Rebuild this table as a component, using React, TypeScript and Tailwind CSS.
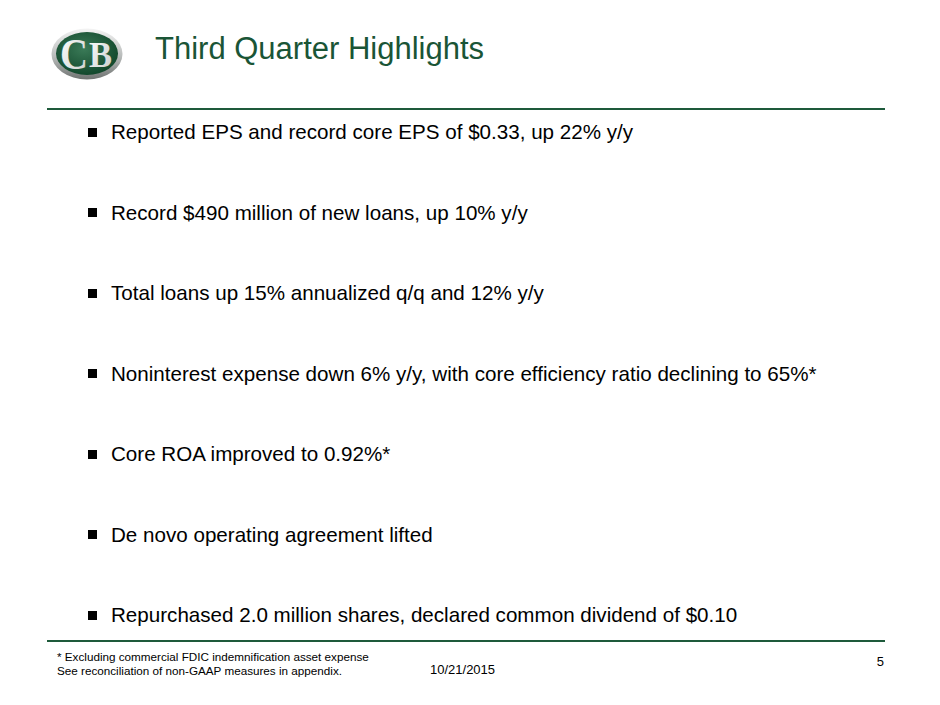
const bullets = [
  "Reported EPS and record core EPS of $0.33, up 22% y/y",
  "Record $490 million of new loans, up 10% y/y",
  "Total loans up 15% annualized q/q and 12% y/y",
  "Noninterest expense down 6% y/y, with core efficiency ratio declining to 65%*",
  "Core ROA improved to 0.92%*",
  "De novo operating agreement lifted",
  "Repurchased 2.0 million shares, declared common dividend of $0.10",
];

function Logo() {
  return (
    <svg width="72" height="52" viewBox="0 0 72 52">
      <defs>
        <linearGradient id="ring" x1="0" y1="0" x2="0" y2="1">
          <stop offset="0" stopColor="#f4f4f4" />
          <stop offset="0.55" stopColor="#b8bbba" />
          <stop offset="1" stopColor="#6f7371" />
        </linearGradient>
        <radialGradient id="face" cx="0.45" cy="0.4" r="0.65">
          <stop offset="0" stopColor="#3a7a57" />
          <stop offset="1" stopColor="#0f4429" />
        </radialGradient>
        <linearGradient id="letter" x1="0" y1="0" x2="1" y2="1">
          <stop offset="0" stopColor="#ffffff" />
          <stop offset="1" stopColor="#c9ccca" />
        </linearGradient>
      </defs>
      <ellipse cx="36" cy="26" rx="35.5" ry="25.5" fill="url(#ring)" />
      <ellipse cx="36" cy="25.5" rx="31" ry="21.5" fill="url(#face)" />
      <text
        x="9"
        y="41"
        fill="url(#letter)"
        fontFamily="'Liberation Serif', serif"
        fontWeight="bold"
        fontSize="44"
        textLength="28"
        lengthAdjust="spacingAndGlyphs"
      >
        C
      </text>
      <text
        x="38"
        y="39"
        fill="url(#letter)"
        fontFamily="'Liberation Serif', serif"
        fontWeight="bold"
        fontSize="36"
        textLength="23"
        lengthAdjust="spacingAndGlyphs"
      >
        B
      </text>
    </svg>
  );
}

export default function App() {
  return (
    <div className="w-[940px] h-[705px] bg-white overflow-hidden font-['Liberation_Sans',Arial,sans-serif] text-black">
      <div className="flex items-start h-[108px]">
        <div className="ml-[51px] mt-[28px]">
          <Logo />
        </div>
        <h1 className="ml-[32px] mt-[31px] text-[31px] leading-[36px] text-[#1a5536]">
          Third Quarter Highlights
        </h1>
      </div>
      <div className="ml-[47px] w-[838px] h-[2px] bg-[#1e5a3b]" />
      <ul className="mt-[10px] ml-[88px] flex flex-col gap-[56.5px]">
        {bullets.map((b) => (
          <li key={b} className="flex items-center h-[24px]">
            <span className="w-[9px] h-[9px] bg-black mr-[14px] shrink-0" />
            <span className="text-[20.6px] leading-[24px] whitespace-nowrap">{b}</span>
          </li>
        ))}
      </ul>
      <div className="mt-[13px] ml-[47px] w-[838px] h-[2px] bg-[#1e5a3b]" />
      <div className="flex items-start mt-[8px] ml-[57px] w-[828px] text-[11.7px] leading-[14px]">
        <div className="w-[373px]">
          <div>* Excluding commercial FDIC indemnification asset expense</div>
          <div>See reconciliation of non-GAAP measures in appendix.</div>
        </div>
        <div className="mt-[12px] text-[13px] leading-[16px]">10/21/2015</div>
        <div className="ml-auto mt-[4px] mr-[1px] text-[13px] leading-[16px]">5</div>
      </div>
    </div>
  );
}
